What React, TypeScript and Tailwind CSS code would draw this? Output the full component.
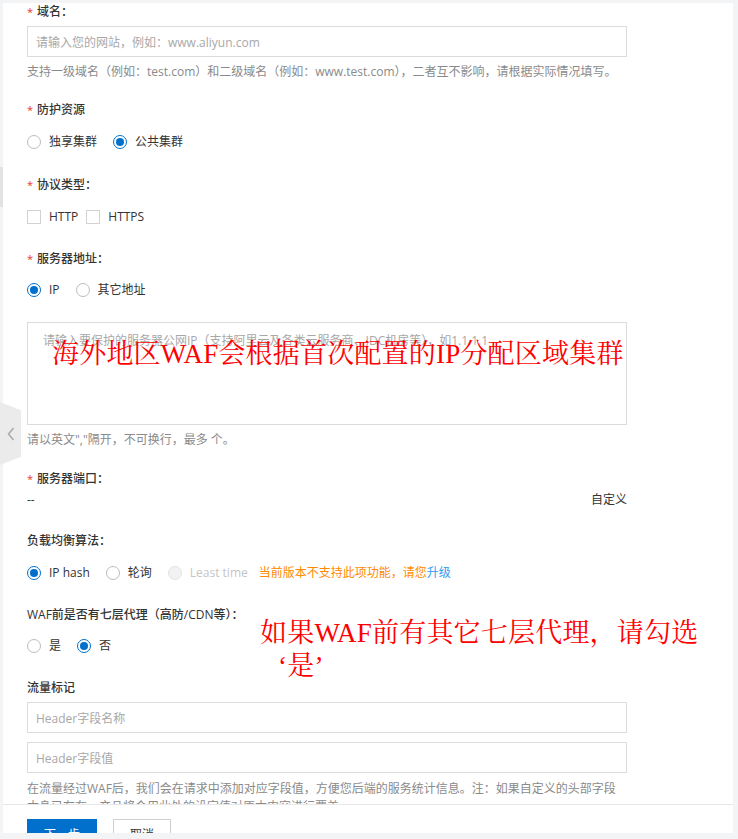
import { ReactNode } from 'react';

const FONT = '[font-family:"Open_Sans","Noto_Sans_CJK_SC",sans-serif]';

const Label = ({ children, required, className = '' }: { children: ReactNode; required?: boolean; className?: string }) => (
  <div className={`flex items-center h-[18px] text-xs font-medium text-[#333] ${className}`}>
    {required && <span className="text-[#e8372b] mr-[4px] text-[11px]">*</span>}
    {children}
  </div>
);

const Radio = ({ label, checked, disabled }: { label: string; checked?: boolean; disabled?: boolean }) => (
  <label className="flex items-center mr-4 h-[18px]">
    <span
      className={`w-[14px] h-[14px] rounded-full border flex items-center justify-center ${
        checked ? 'border-[#0070cc]' : disabled ? 'border-[#e3e3e3] bg-[#f2f2f2]' : 'border-[#bcbcbc]'
      }`}
    >
      {checked && <span className="w-[8px] h-[8px] rounded-full bg-[#0070cc]" />}
    </span>
    <span className={`ml-2 text-xs ${disabled ? 'text-[#c5c5c5]' : 'text-[#333]'}`}>{label}</span>
  </label>
);

const Checkbox = ({ label }: { label: string }) => (
  <label className="flex items-center mr-2 h-[18px]">
    <span className="w-[14px] h-[14px] border border-[#d2d2d2]" />
    <span className="ml-2 text-xs text-[#333]">{label}</span>
  </label>
);

const TextInput = ({ placeholder, className = '' }: { placeholder: string; className?: string }) => (
  <input
    placeholder={placeholder}
    className={`block w-[600px] h-[31px] border border-[#dcdcdc] px-2 pt-[2px] text-xs outline-none placeholder:text-[#a8a8a8] ${className}`}
  />
);

const Help = ({ children, className = '' }: { children: ReactNode; className?: string }) => (
  <div className={`text-xs leading-[18px] text-[#8a8a8a] ${className}`}>{children}</div>
);

const NOTE = 'absolute text-[27px] leading-[33px] text-[#ff0000] whitespace-nowrap tracking-[0.2px] [font-family:"Liberation_Serif","Noto_Serif_CJK_SC","Noto_Sans_CJK_SC",serif]';

export default function App() {
  return (
    <div className={`relative w-[738px] h-[839px] bg-[#f3f4f6] overflow-hidden ${FONT}`}>
      {/* left scroll hint */}
      <div className="absolute left-0 top-[167px] w-[3px] h-[40px] bg-[#e2e2e2]" />

      <div className="ml-[3px] mt-[3px] w-[730px] h-[830px] bg-white flex flex-col overflow-hidden">
        <div className="relative flex-1 overflow-hidden pl-[24px]">
          <Label required>域名：</Label>
          <TextInput className="mt-[5px]" placeholder="请输入您的网站，例如：www.aliyun.com" />
          <Help className="mt-[6px]">
            支持一级域名（例如：test.com）和二级域名（例如：www.test.com），二者互不影响，请根据实际情况填写。
          </Help>

          <Label required className="mt-[20px]">防护资源</Label>
          <div className="flex mt-[14px]">
            <Radio label="独享集群" />
            <Radio label="公共集群" checked />
          </div>

          <Label required className="mt-[25px]">协议类型：</Label>
          <div className="flex mt-[14px]">
            <Checkbox label="HTTP" />
            <Checkbox label="HTTPS" />
          </div>

          <Label required className="mt-[24px]">服务器地址：</Label>
          <div className="flex mt-[13px]">
            <Radio label="IP" checked />
            <Radio label="其它地址" />
          </div>

          <textarea
            placeholder="请输入要保护的服务器公网IP（支持阿里云及各类云服务商、IDC机房等），如1.1.1.1"
            className="block mt-[23px] w-[600px] h-[103px] border border-[#dcdcdc] pl-[15px] pt-[10px] text-xs resize-none outline-none placeholder:text-[#a8a8a8]"
          />
          <Help className="mt-[6px]">请以英文","隔开，不可换行，最多 个。</Help>

          <Label required className="mt-[21px]">服务器端口：</Label>
          <div className="flex justify-between w-[600px] mt-[3px] h-[18px] items-center text-xs text-[#333]">
            <span>--</span>
            <span>自定义</span>
          </div>

          <Label className="mt-[23px]">负载均衡算法：</Label>
          <div className="flex items-center mt-[14px]">
            <Radio label="IP hash" checked />
            <Radio label="轮询" />
            <Radio label="Least time" disabled />
            <span className="text-xs text-[#ff8a00] -ml-[5px]">
              当前版本不支持此项功能，请您<span className="text-[#2d9cf0]">升级</span>
            </span>
          </div>

          <Label className="mt-[24px]">WAF前是否有七层代理（高防/CDN等）：</Label>
          <div className="flex mt-[13px]">
            <Radio label="是" />
            <Radio label="否" checked />
          </div>

          <Label className="mt-[24px]">流量标记</Label>
          <TextInput className="mt-[5px]" placeholder="Header字段名称" />
          <TextInput className="mt-[9px]" placeholder="Header字段值" />
          <Help className="mt-[7px] w-[600px]">
            在流量经过WAF后，我们会在请求中添加对应字段值，方便您后端的服务统计信息。注：如果自定义的头部字段本身已存在，产品将会用此处的设定值对原本内容进行覆盖。
          </Help>

          {/* red annotations */}
          <div className={`${NOTE} left-[49px] top-[335px]`}>海外地区WAF会根据首次配置的IP分配区域集群</div>
          <div className={`${NOTE} left-[257px] top-[614px]`}>
            如果WAF前有其它七层代理，请勾选
            <br />
            <span className="pl-[18px]">‘是’</span>
          </div>
        </div>

        <div className="shrink-0 h-[29px] border-t border-[#e8e8e8] pl-[24px] pt-[14px] flex gap-4 items-start">
          <button className="shrink-0 w-[70px] h-8 bg-[#0070cc] text-white text-xs">下一步</button>
          <button className="shrink-0 w-[58px] h-8 border border-[#cfcfcf] bg-white text-[#333] text-xs">取消</button>
        </div>
      </div>

      {/* collapse handle */}
      <div className="absolute left-0 top-[402px] w-[21px] h-[63px] bg-[#ebebeb] [clip-path:polygon(0_0,100%_13%,100%_87%,0_100%)] flex items-center justify-center">
        <svg width="8" height="14" viewBox="0 0 8 14" fill="none">
          <path d="M6.5 1L1.5 7l5 6" stroke="#a9a9a9" strokeWidth="1.5" />
        </svg>
      </div>
    </div>
  );
}
